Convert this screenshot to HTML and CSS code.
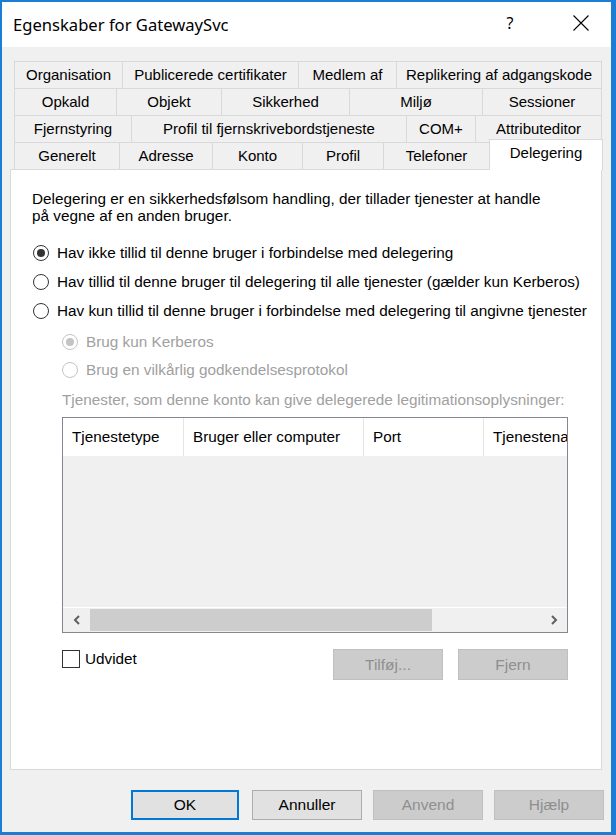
FILE: index.html
```html
<!DOCTYPE html>
<html lang="da">
<head>
<meta charset="utf-8">
<title>Egenskaber for GatewaySvc</title>
<link rel="stylesheet" href="styles.css">
</head>
<body>
<div class="window">
  <div class="titlebar">
    <span class="title">Egenskaber for GatewaySvc</span>
    <span class="help">?</span>
    <svg class="close" width="16" height="16" viewBox="0 0 16 16"><path d="M0.5 0.5 L15.5 15.5 M15.5 0.5 L0.5 15.5" stroke="#000" stroke-width="1.1" fill="none"/></svg>
  </div>
  <div class="content">
    <div class="tabs">
      <div class="tabrow">
        <div class="tab w109">Organisation</div>
        <div class="tab w177">Publicerede certifikater</div>
        <div class="tab w99">Medlem af</div>
        <div class="tab w206">Replikering af adgangskode</div>
      </div>
      <div class="tabrow">
        <div class="tab w103">Opkald</div>
        <div class="tab w106">Objekt</div>
        <div class="tab w129">Sikkerhed</div>
        <div class="tab w134">Miljø</div>
        <div class="tab w120">Sessioner</div>
      </div>
      <div class="tabrow">
        <div class="tab w118">Fjernstyring</div>
        <div class="tab w276">Profil til fjernskrivebordstjeneste</div>
        <div class="tab w70">COM+</div>
        <div class="tab w127">Attributeditor</div>
      </div>
      <div class="tabrow">
        <div class="tab w106">Generelt</div>
        <div class="tab w94">Adresse</div>
        <div class="tab w91">Konto</div>
        <div class="tab w82">Profil</div>
        <div class="tab w107">Telefoner</div>
        <div class="tab w114 selected">Delegering</div>
      </div>
    </div>
    <div class="panel">
      <p class="desc">Delegering er en sikkerhedsfølsom handling, der tillader tjenester at handle<br>på vegne af en anden bruger.</p>
      <div class="radios">
        <div class="radio-row"><span class="radio checked"></span><span class="rlabel">Hav ikke tillid til denne bruger i forbindelse med delegering</span></div>
        <div class="radio-row"><span class="radio"></span><span class="rlabel">Hav tillid til denne bruger til delegering til alle tjenester (gælder kun Kerberos)</span></div>
        <div class="radio-row"><span class="radio"></span><span class="rlabel">Hav kun tillid til denne bruger i forbindelse med delegering til angivne tjenester</span></div>
      </div>
      <div class="subradios">
        <div class="radio-row sub"><span class="radio checked disabled"></span><span class="rlabel dis">Brug kun Kerberos</span></div>
        <div class="radio-row sub"><span class="radio disabled"></span><span class="rlabel dis">Brug en vilkårlig godkendelsesprotokol</span></div>
      </div>
      <div class="listlabel">Tjenester, som denne konto kan give delegerede legitimationsoplysninger:</div>
      <div class="listbox">
        <div class="lhead">
          <div class="col c1">Tjenestetype</div>
          <div class="col c2">Bruger eller computer</div>
          <div class="col c3">Port</div>
          <div class="col c4">Tjenestenavn</div>
        </div>
        <div class="lbody"></div>
        <div class="hscroll">
          <div class="sbtn"><svg width="8" height="10" viewBox="0 0 8 10"><path d="M6 1 L2 5 L6 9" stroke="#606060" stroke-width="2" fill="none"/></svg></div>
          <div class="thumb"></div>
          <div class="track"></div>
          <div class="sbtn"><svg width="8" height="10" viewBox="0 0 8 10"><path d="M2 1 L6 5 L2 9" stroke="#606060" stroke-width="2" fill="none"/></svg></div>
        </div>
      </div>
      <div class="bottomrow">
        <label class="check"><span class="checkbox"></span><span class="cblabel">Udvidet</span></label>
        <span class="spacer"></span>
        <button class="btn disabled">Tilføj...</button>
        <button class="btn disabled">Fjern</button>
      </div>
    </div>
    <div class="footer">
      <button class="btn fbtn default">OK</button>
      <button class="btn fbtn">Annuller</button>
      <button class="btn fbtn disabled">Anvend</button>
      <button class="btn fbtn disabled">Hjælp</button>
    </div>
  </div>
</div>
</body>
</html>
```
FILE: styles.css
```css
html, body {
  margin: 0;
  padding: 0;
}
body {
  font-family: "Liberation Sans", Arial, sans-serif;
  font-size: 15px;
  color: #000;
  background: #1a7fd4;
}
.window {
  width: 616px;
  height: 835px;
  box-sizing: border-box;
  border-style: solid;
  border-color: #1a7fd4;
  border-width: 2px 5px 3px 2px;
  display: flex;
  flex-direction: column;
  background: #f0f0f0;
}
.titlebar {
  height: 45px;
  flex: 0 0 45px;
  background: #fff;
  display: flex;
  align-items: center;
  padding-left: 11px;
  font-family: "Noto Sans", "Open Sans", sans-serif;
  font-size: 16.6px;
}
.title {
  flex: 1;
  margin-top: -1px;
}
.help {
  width: 16px;
  text-align: center;
  font-size: 16px;
  margin-top: -4px;
}
.close {
  margin-left: 55px;
  margin-right: 22px;
  margin-top: -3px;
}
.content {
  flex: 1;
  display: flex;
  flex-direction: column;
  padding: 14px 9px 0 8px;
}
.tabs {
  margin: 0 1px 0 4px;
}
.tabrow {
  display: flex;
  align-items: flex-start;
  height: 28px;
}
.tabrow + .tabrow {
  margin-top: -1px;
}
.tab {
  flex: 0 0 auto;
  height: 28px;
  box-sizing: border-box;
  border: 1px solid #d9d9d9;
  background: #f0f0f0;
  display: flex;
  align-items: center;
  justify-content: center;
  padding: 0 2px 1px;
  white-space: nowrap;
}
.tab + .tab {
  margin-left: -1px;
}
.w70 { flex-basis: 70px; }
.w82 { flex-basis: 82px; }
.w91 { flex-basis: 91px; }
.w94 { flex-basis: 94px; }
.w99 { flex-basis: 99px; }
.w103 { flex-basis: 103px; }
.w106 { flex-basis: 106px; }
.w107 { flex-basis: 107px; }
.w109 { flex-basis: 109px; }
.w114 { flex-basis: 114px; }
.w118 { flex-basis: 118px; }
.w120 { flex-basis: 120px; }
.w127 { flex-basis: 127px; }
.w129 { flex-basis: 129px; }
.w134 { flex-basis: 134px; }
.w177 { flex-basis: 177px; }
.w206 { flex-basis: 206px; }
.w276 { flex-basis: 276px; }
.tab.selected {
  position: relative;
  z-index: 1;
  background: #fff;
  height: 31px;
  margin-top: -3px;
  margin-right: -2px;
  border-bottom: none;
  padding-bottom: 5px;
}
.panel {
  height: 601px;
  box-sizing: border-box;
  margin-top: -1px;
  background: #fff;
  border: 1px solid #d9d9d9;
  padding: 20px 0 0 22px;
  display: flex;
  flex-direction: column;
  font-size: 15.3px;
}
.desc {
  margin: 0 0 0 -1px;
  line-height: 17px;
}
.radios {
  margin-top: 14px;
}
.radio-row {
  display: flex;
  align-items: center;
  height: 29px;
  white-space: nowrap;
}
.subradios {
  margin-top: 3px;
  margin-left: 29px;
}
.radio-row.sub {
  height: 28px;
}
.radio {
  width: 16px;
  height: 16px;
  box-sizing: border-box;
  border: 1px solid #333;
  border-radius: 50%;
  background: #fff;
  display: flex;
  align-items: center;
  justify-content: center;
  flex: 0 0 16px;
}
.radio.checked::after {
  content: "";
  width: 8px;
  height: 8px;
  border-radius: 50%;
  background: #333;
}
.radio.disabled {
  border-color: #c4c4c4;
}
.radio.disabled.checked::after {
  background: #c4c4c4;
}
.rlabel {
  margin-left: 8px;
}
.rlabel.dis {
  color: #a0a0a0;
}
.listlabel {
  margin: 7px 0 0 29px;
  height: 18px;
  line-height: 18px;
  color: #a0a0a0;
  white-space: nowrap;
}
.listbox {
  margin: 8px 0 0 29px;
  width: 506px;
  height: 216px;
  box-sizing: border-box;
  border: 1px solid #828790;
  display: flex;
  flex-direction: column;
  overflow: hidden;
}
.lhead {
  display: flex;
  height: 38px;
  flex: 0 0 38px;
  background: #fff;
}
.col {
  box-sizing: border-box;
  padding-left: 9px;
  display: flex;
  align-items: center;
  border-right: 1px solid #e5e5e5;
  white-space: nowrap;
  overflow: hidden;
}
.c1 { flex: 0 0 121px; }
.c2 { flex: 0 0 180px; }
.c3 { flex: 0 0 120px; }
.c4 { flex: 0 0 120px; border-right: none; }
.lbody {
  flex: 0 0 151px;
  background: #f0f0f0;
}
.hscroll {
  flex: 1;
  display: flex;
  align-items: stretch;
  background: #f0f0f0;
  border-top: 1px solid #fff;
}
.sbtn {
  flex: 0 0 27px;
  display: flex;
  align-items: center;
  justify-content: center;
}
.thumb {
  flex: 0 0 342px;
  background: #cdcdcd;
  margin: 1px 0 1px;
}
.track {
  flex: 1;
}
.bottomrow {
  display: flex;
  align-items: flex-start;
  height: 31px;
  margin: 16px 33px 0 29px;
}
.check {
  display: flex;
  align-items: center;
  height: 20px;
  margin-top: 0;
}
.checkbox {
  width: 18px;
  height: 18px;
  box-sizing: border-box;
  border: 1px solid #333;
  background: #fff;
}
.cblabel {
  margin-left: 5px;
}
.spacer {
  flex: 1;
}
.btn {
  font-family: "Liberation Sans", Arial, sans-serif;
  font-size: 15.5px;
  color: #000;
  width: 110px;
  height: 31px;
  box-sizing: border-box;
  background: #e1e1e1;
  border: 1px solid #adadad;
  padding: 0;
  margin: 0;
}
.btn + .btn {
  margin-left: 15px;
}
.btn.disabled {
  background: #cccccc;
  border-color: #bfbfbf;
  color: #8f8f8f;
}
.footer {
  display: flex;
  justify-content: flex-end;
  padding: 20px 0 12px 0;
  margin-right: -2px;
}
.fbtn {
  height: 30px;
}
.fbtn + .fbtn {
  margin-left: 11px;
}
.fbtn.default {
  width: 108px;
  margin-right: 2px;
  border: 2px solid #0078d7;
}
```
